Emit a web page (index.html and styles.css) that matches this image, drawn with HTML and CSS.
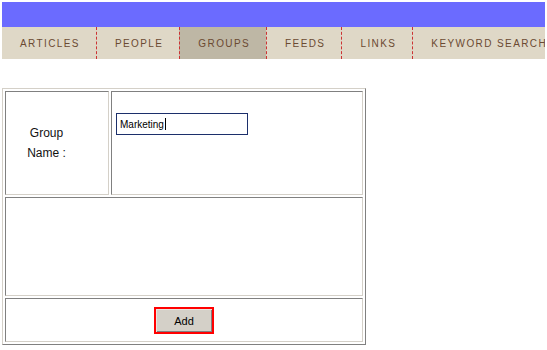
FILE: index.html
```html
<!DOCTYPE html>
<html lang="en">
<head>
  <meta charset="UTF-8" />
  <title>Add Group</title>
  <link rel="stylesheet" href="styles.css">
</head>
<body>
  <div class="top-bar"></div>

  <ul class="nav">
    <li>Articles</li>
    <li>People</li>
    <li class="active">Groups</li>
    <li>Feeds</li>
    <li>Links</li>
    <li class="last">Keyword Search</li>
  </ul>

  <form class="group-form" action="/add_group" method="POST">
    <div class="cell label-cell">Group<br>Name :</div>
    <div class="cell field-cell">
      <span class="fake-input">Marketing<span class="caret"></span></span>
    </div>
    <div class="cell wide empty-cell"></div>
    <div class="cell wide button-cell">
      <button type="submit" class="add-button">Add</button>
    </div>
  </form>
</body>
</html>
```

FILE: styles.css
```css
html, body {
  overflow: hidden;
}

body {
  margin: 2px;
  font-family: "Liberation Sans", Arial, sans-serif;
  background-color: #fff;
}

.top-bar {
  height: 25px;
  background-color: #6b6bff;
  margin-right: -2px;
}

.nav {
  display: flex;
  list-style: none;
  margin: 0 -2px 0 0;
  padding: 0;
  height: 32px;
  background-color: #dfd8c7;
}

.nav li {
  display: flex;
  align-items: center;
  padding: 0 16px 0 18px;
  font-size: 10px;
  letter-spacing: 1.4px;
  text-transform: uppercase;
  color: #6b4a32;
  white-space: nowrap;
  border-left: 1px dashed #cc3333;
}

.nav li:first-child {
  border-left: none;
}

.nav li.active {
  background-color: #beb7a5;
}

.nav li.last {
  flex: 1;
}

.group-form {
  display: grid;
  grid-template-columns: 104px 252px;
  grid-template-rows: 104px 99px 44px;
  gap: 2px;
  padding: 2px;
  margin-top: 29px;
  width: 358px;
  border: 1px solid;
  border-color: #d4d0c8 #808080 #808080 #d4d0c8;
}

.cell {
  box-sizing: border-box;
  border: 1px solid;
  border-color: #808080 #d4d0c8 #d4d0c8 #808080;
}

.cell.wide {
  grid-column: 1 / 3;
}

.label-cell {
  display: flex;
  align-items: center;
  justify-content: center;
  padding-right: 21px;
  text-align: center;
  font-size: 12px;
  line-height: 20px;
  color: #111;
}

.field-cell {
  padding: 21px 0 0 4px;
}

.fake-input {
  display: flex;
  align-items: center;
  box-sizing: border-box;
  width: 132px;
  height: 22px;
  padding-left: 3px;
  border: 1px solid #1c2f6b;
  font-size: 10px;
  color: #000;
}

.caret {
  display: inline-block;
  width: 1px;
  height: 12px;
  margin-left: 1px;
  background-color: #000;
}

.button-cell {
  display: flex;
  align-items: center;
  justify-content: center;
}

.add-button {
  width: 60px;
  height: 27px;
  margin-top: 1px;
  padding: 0;
  font-family: "Liberation Sans", Arial, sans-serif;
  font-size: 11px;
  color: #000;
  background-color: #d4d0c8;
  border: 2px solid #ff0000;
  box-shadow: inset 1px 1px 0 #e8e5df, inset -1px -1px 0 #808080;
  cursor: pointer;
}
```
